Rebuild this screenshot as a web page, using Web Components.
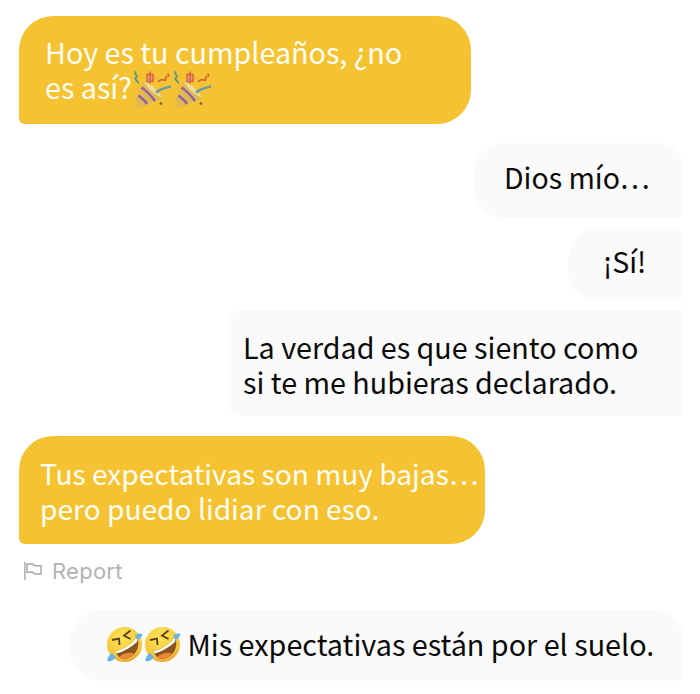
<!DOCTYPE html>
<html lang="es"><head><meta charset="utf-8"><title>Chat</title>
<style>
html,body{margin:0;background:#fff}
body{font-family:"Noto Sans CJK JP","Noto Sans",sans-serif}
</style></head><body>
<chat-thread>
  <chat-bubble kind="them" style="--w:452px;--h:108px;--pl:26px;--pt:18px;--fs:28.7px;--r:34px 34px 34px 6px">Hoy es tu cumpleaños, ¿no<br>es así?<party-emoji></party-emoji><party-emoji></party-emoji></chat-bubble>
  <chat-bubble kind="me" style="--w:210px;--h:75px;--pl:31px;--pt:16px;--mt:19px;--r:32px 26px 5px 32px">Dios mío…</chat-bubble>
  <chat-bubble kind="me" style="--w:115px;--h:72px;--pl:35px;--pt:15px;--mt:10px;--r:32px 10px 6px 28px">¡Sí!</chat-bubble>
  <chat-bubble kind="me" style="--w:455px;--h:106px;--pl:15px;--pt:19px;--mt:10px;--fs:28.7px;--r:12px 3px 3px 14px">La verdad es que siento como<br>si te me hubieras declarado.</chat-bubble>
  <chat-bubble kind="them" style="--w:466px;--h:108px;--pl:21px;--pt:19px;--mt:20px;--fs:28.15px;--r:34px 34px 34px 6px">Tus expectativas son muy bajas…<br>pero puedo lidiar con eso.</chat-bubble>
  <report-link>Report</report-link>
  <chat-bubble kind="me" style="--w:613px;--h:71px;--pl:36px;--pt:16px;--mt:25px;--fs:28.75px;--r:32px 28px 6px 32px"><rofl-emoji></rofl-emoji><rofl-emoji></rofl-emoji> Mis expectativas están por el suelo.</chat-bubble>
</chat-thread>
<script>
function def(name, html){
  customElements.define(name, class extends HTMLElement{
    constructor(){super();this.attachShadow({mode:'open'}).innerHTML=html;}
  });
}
def('chat-thread',`<style>:host{display:flex;flex-direction:column;box-sizing:border-box;width:700px;height:694px;padding:16px 17px 0 19px;overflow:hidden}</style><slot></slot>`);
def('chat-bubble',`<style>
:host{display:block;box-sizing:border-box;width:var(--w);height:var(--h);margin-top:var(--mt,0);padding:var(--pt) 0 0 var(--pl);font-size:var(--fs,28.5px);line-height:35px;white-space:nowrap;border-radius:var(--r)}
:host([kind=them]){align-self:flex-start;background:#f5c332;color:#fffdf3}
:host([kind=me]){align-self:flex-end;background:#fafafa;color:#0a0a0a}
</style><slot></slot>`);
def('report-link',`<style>
:host{display:flex;align-items:center;gap:10px;height:28px;margin-top:13px;padding-left:5px;color:#b2b2b2;font:22px/28px "Inter","Noto Sans",sans-serif;letter-spacing:.25px}
svg{width:18px;height:18px;flex:none;filter:blur(.3px)}
</style><svg viewBox="0 0 18 18" fill="none" stroke="#a6a6a6" stroke-width="1.400"><path d="M.9 0v18"/><path d="M3 2h6l1.500 1.800H17V12h-6.500L9 10.300H3Z"/></svg><slot></slot>`);
def('party-emoji',`<style>:host{display:inline-block;width:40px;height:39px;vertical-align:-10px}svg{display:block;width:100%;height:100%;filter:blur(.35px)}</style>
<svg viewBox="0 0 40 38">
<path d="M12 11 C17 12 27 20 30 27 C24 32 12 36 5 37.500 C3 38 2.500 36.500 3 35 C4 27 8 17 12 11Z" fill="#e2b94f"/>
<path d="M12 11 C17 12 27 20 30 27 C25 26 14 17 12 11Z" fill="#efdc95"/>
<path d="M9.500 17 C14 20 19 25 23 30.500" fill="none" stroke="#8f62a8" stroke-width="2.500"/>
<path d="M6.500 25 C9 27 13 30 15 33.500" fill="none" stroke="#8f62a8" stroke-width="2.500"/>
<path d="M24 22 C29 18 34 17 39 16" stroke="#6f9c9e" stroke-width="2.800" fill="none"/>
<path d="M15 4 h6 v7 h-6Z" fill="#e9a27a" stroke="#d8603c" stroke-width="1.500"/><path d="M18 1v12" stroke="#d8603c" stroke-width="1.600"/>
<path d="M4 1 c-3 2 3 4 0 6 c-3 2 3 3 2 6" fill="none" stroke="#4f9a8f" stroke-width="1.800"/>
<path d="M26 11 l4-2 M30 9 l3 1 2-5 M36 3l1 3" fill="none" stroke="#d8603c" stroke-width="1.600"/>
<circle cx="29" cy="33" r="1.400" fill="#7a6a30"/><circle cx="24" cy="8" r="1" fill="#d8a08a"/><circle cx="34" cy="24" r="1" fill="#e0b060"/>
</svg>`);
def('rofl-emoji',`<style>:host{display:inline-block;width:37px;height:37px;margin-right:.5px;vertical-align:-7px}svg{display:block;width:100%;height:100%;filter:blur(.35px)}</style>
<svg viewBox="0 0 37 37">
<defs><radialGradient id="f" cx=".45" cy=".3" r=".8"><stop offset="0" stop-color="#fbe555"/><stop offset=".7" stop-color="#f6c63a"/><stop offset="1" stop-color="#e0902b"/></radialGradient></defs>
<circle cx="18.500" cy="18.500" r="17.500" fill="url(#f)"/>
<path d="M9 25 C17 24 26 18 31 11 C35 20 30 30 21 32.500 C15 34 11 30 9 25Z" fill="#8a5520"/>
<path d="M13 31 C18 26.500 25 26 28 27.500 C24 33 17 34 13 31Z" fill="#e8873a"/>
<path d="M9 25 C17 24 26 18 31 11 C31.500 13 31.500 14.500 31 16 C25 21.500 18 25.500 10.500 27.500Z" fill="#fffdf0"/>
<path d="M6 14 L13 12.500 L13.500 19" fill="none" stroke="#5c3d1c" stroke-width="1.800"/>
<path d="M24.500 4.500 L18 9.500 L24.500 13" fill="none" stroke="#5c3d1c" stroke-width="1.800"/>
<path d="M29 10 C32 7 35 7 36.500 8.500 C35.500 11.500 33 13.500 31 13.500Z" fill="#69b4e4"/>
<path d="M6 27 C3 29 .8 32.500 1.500 35 C4.500 36 8 34 10 31Z" fill="#69b4e4"/>
</svg>`);
</script>
</body></html>
